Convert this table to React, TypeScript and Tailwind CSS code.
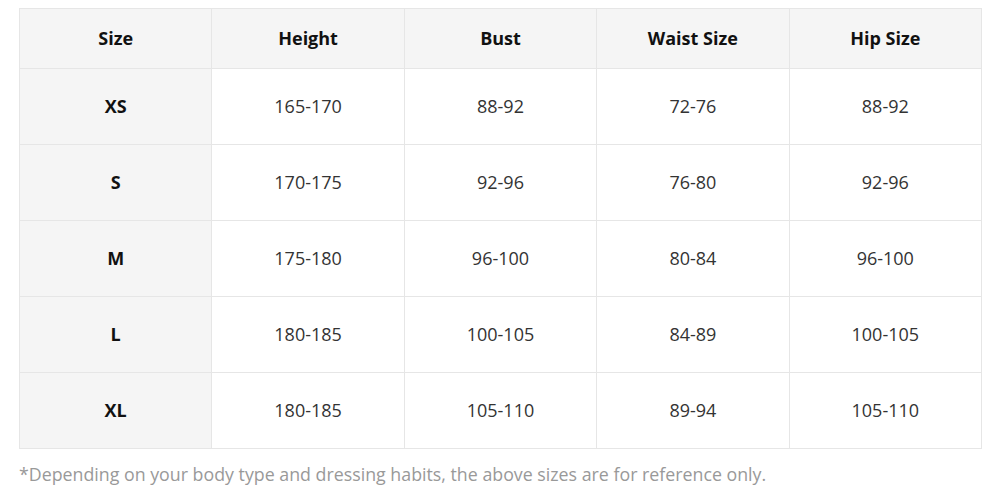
import React from "react";

const rows = [
  ["XS", "165-170", "88-92", "72-76", "88-92"],
  ["S", "170-175", "92-96", "76-80", "92-96"],
  ["M", "175-180", "96-100", "80-84", "96-100"],
  ["L", "180-185", "100-105", "84-89", "100-105"],
  ["XL", "180-185", "105-110", "89-94", "105-110"],
];

const heads = ["Size", "Height", "Bust", "Waist Size", "Hip Size"];

export default function App() {
  return (
    <div className="w-[996px] h-[495px] bg-white pt-2 pl-[19px]" style={{ fontFamily: '"Open Sans", "Noto Sans", sans-serif' }}>
      <table className="w-[963px] table-fixed border-collapse">
        <thead>
          <tr className="h-[60px] bg-[#f5f5f5]">
            {heads.map((h) => (
              <th key={h} className="border border-[#e6e6e6] text-center text-[18px] font-bold text-[#111]">
                {h}
              </th>
            ))}
          </tr>
        </thead>
        <tbody>
          {rows.map((r) => (
            <tr key={r[0]} className="h-[76px]">
              {r.map((c, i) =>
                i === 0 ? (
                  <td key={i} className="border border-[#e6e6e6] bg-[#f5f5f5] text-center text-[18px] font-bold text-[#111]">
                    {c}
                  </td>
                ) : (
                  <td key={i} className="border border-[#e6e6e6] text-center text-[18px] text-[#333]">
                    {c}
                  </td>
                )
              )}
            </tr>
          ))}
        </tbody>
      </table>
      <p className="mt-[12px] text-[17.8px] text-[#999]">
        *Depending on your body type and dressing habits, the above sizes are for reference only.
      </p>
    </div>
  );
}
